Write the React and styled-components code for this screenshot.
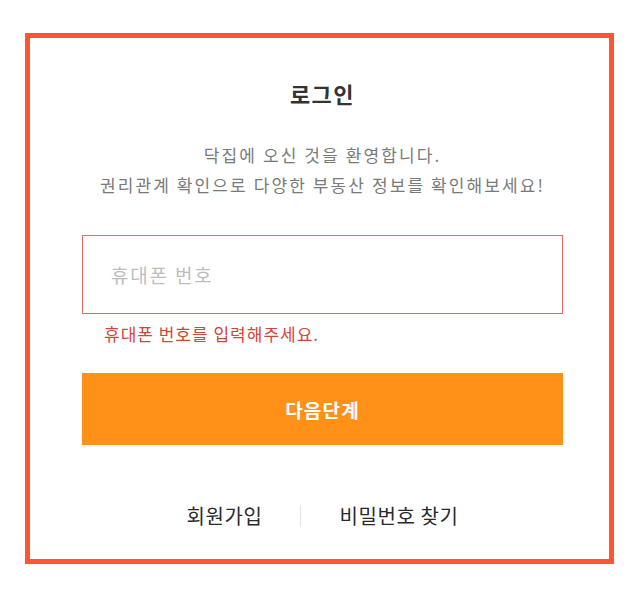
import React from "react";
import styled, { createGlobalStyle } from "styled-components";

const GlobalStyle = createGlobalStyle`
  body {
    margin: 0;
    background: #fff;
    font-family: "Noto Sans CJK KR", "Noto Sans", sans-serif;
  }
`;

const Frame = styled.div`
  box-sizing: border-box;
  width: 589px;
  height: 531px;
  margin: 33px 0 0 25px;
  border: 5px solid #ff5532;
  padding: 40px 46px 0 52px;
  display: flex;
  flex-direction: column;
  align-items: stretch;
`;

const Title = styled.h1`
  margin: 0;
  font-size: 22px;
  line-height: 30px;
  font-weight: 700;
  letter-spacing: 1.5px;
  color: #333;
  text-align: center;
`;

const Desc = styled.p`
  margin: 32px 0 0;
  font-size: 17px;
  line-height: 30px;
  letter-spacing: 2.1px;
  color: #7a7a7a;
  text-align: center;
`;

const Input = styled.input`
  box-sizing: border-box;
  margin-top: 35px;
  width: 100%;
  height: 79px;
  border: 1px solid #e36a6a;
  padding: 0 28px;
  font-family: inherit;
  font-size: 19px;
  letter-spacing: 1.8px;
  color: #333;
  outline: none;

  &::placeholder {
    color: #bdbdbd;
  }
`;

const ErrorText = styled.p`
  margin: 10px 0 0;
  padding-left: 22px;
  font-size: 17px;
  line-height: 20px;
  letter-spacing: 1px;
  color: #d2453b;
`;

const NextButton = styled.button`
  margin-top: 29px;
  height: 72px;
  border: none;
  background: #ff9119;
  color: #fff;
  font-family: inherit;
  font-size: 19px;
  font-weight: 700;
  letter-spacing: 1.2px;
  cursor: pointer;
`;

const Links = styled.div`
  margin-top: 59px;
  display: flex;
  justify-content: center;
  align-items: center;
  gap: 38px;
`;

const LinkText = styled.a`
  font-size: 20px;
  line-height: 24px;
  letter-spacing: 0.6px;
  color: #2a2a2a;
  text-decoration: none;
  cursor: pointer;
`;

const Divider = styled.span`
  width: 1px;
  height: 22px;
  background: #e4e4e4;
`;

const App = () => {
  return (
    <>
      <GlobalStyle />
      <Frame>
        <Title>로그인</Title>
        <Desc>
          닥집에 오신 것을 환영합니다.
          <br />
          권리관계 확인으로 다양한 부동산 정보를 확인해보세요!
        </Desc>
        <Input type="tel" placeholder="휴대폰 번호" />
        <ErrorText>휴대폰 번호를 입력해주세요.</ErrorText>
        <NextButton type="button">다음단계</NextButton>
        <Links>
          <LinkText>회원가입</LinkText>
          <Divider />
          <LinkText>비밀번호 찾기</LinkText>
        </Links>
      </Frame>
    </>
  );
};

export default App;
